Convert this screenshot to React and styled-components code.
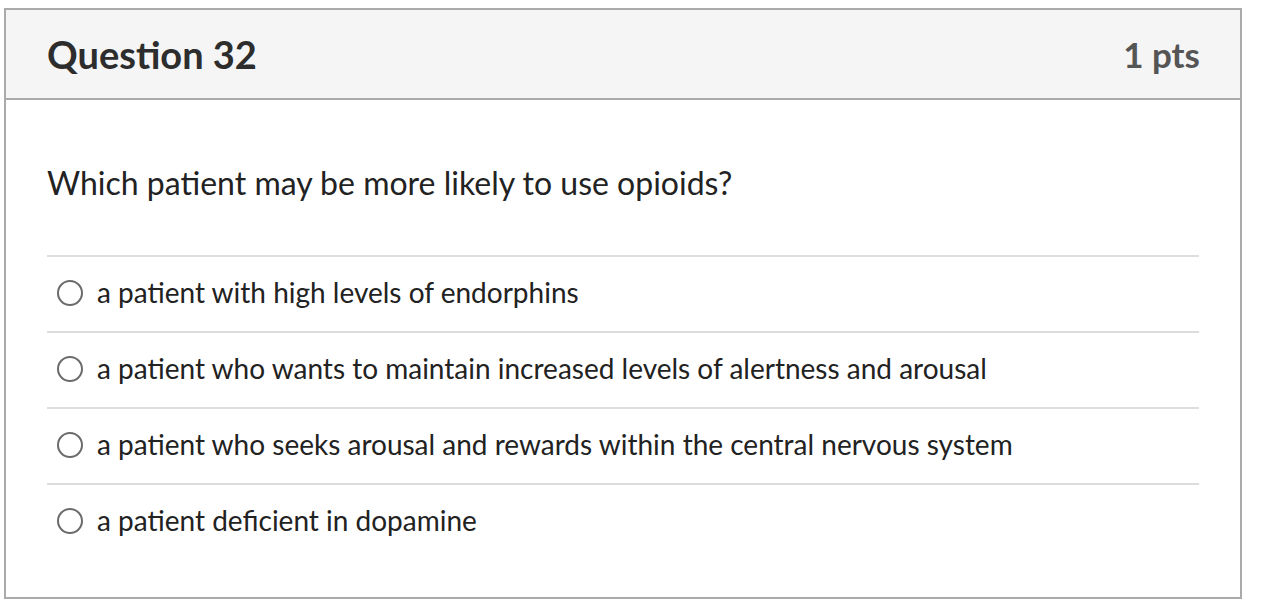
import React from 'react'
import styled, { createGlobalStyle } from 'styled-components'

const GlobalStyle = createGlobalStyle`
  body {
    margin: 0;
    background: #fff;
    font-family: Lato, "Open Sans", sans-serif;
  }
`;

const Card = styled.div`
  margin: 8px 0 0 4px;
  width: 1238px;
  box-sizing: border-box;
  border: 2px solid #aaaaaa;
  background: #fff;
`;

const Header = styled.div`
  height: 90px;
  box-sizing: border-box;
  display: flex;
  align-items: center;
  justify-content: space-between;
  padding: 0 40px 0 41px;
  background: #f5f5f5;
  border-bottom: 2px solid #aaaaaa;
`;

const Title = styled.h2`
  margin: 0;
  font-size: 38px;
  font-weight: 700;
  color: #2d2d2d;
`;

const Points = styled.span`
  font-size: 35px;
  font-weight: 700;
  color: #555;
`;

const Body = styled.div`
  padding: 0 41px 38px 41px;
`;

const QuestionText = styled.p`
  margin: 0;
  padding: 64px 0 53px;
  font-size: 32px;
  line-height: 38px;
  color: #222;
`;

const Answers = styled.div`
  display: flex;
  flex-direction: column;
`;

const Answer = styled.label`
  height: 76px;
  box-sizing: border-box;
  display: flex;
  align-items: center;
  gap: 14px;
  padding: 0 0 4px 10px;
  border-top: 2px solid #dddddd;
  font-size: 28px;
  color: #222;
`;

const Radio = styled.span`
  width: 26px;
  height: 26px;
  box-sizing: border-box;
  border: 2px solid #6b6b6b;
  border-radius: 50%;
  flex-shrink: 0;
  margin-top: 2px;
`;

const answers = [
  'a patient with high levels of endorphins',
  'a patient who wants to maintain increased levels of alertness and arousal',
  'a patient who seeks arousal and rewards within the central nervous system',
  'a patient deficient in dopamine',
];

export default function App() {
  return (
    <>
      <GlobalStyle />
      <Card>
        <Header>
          <Title>Question 32</Title>
          <Points>1 pts</Points>
        </Header>
        <Body>
          <QuestionText>Which patient may be more likely to use opioids?</QuestionText>
          <Answers>
            {answers.map((a) => (
              <Answer key={a}>
                <Radio />
                {a}
              </Answer>
            ))}
          </Answers>
        </Body>
      </Card>
    </>
  )
}
